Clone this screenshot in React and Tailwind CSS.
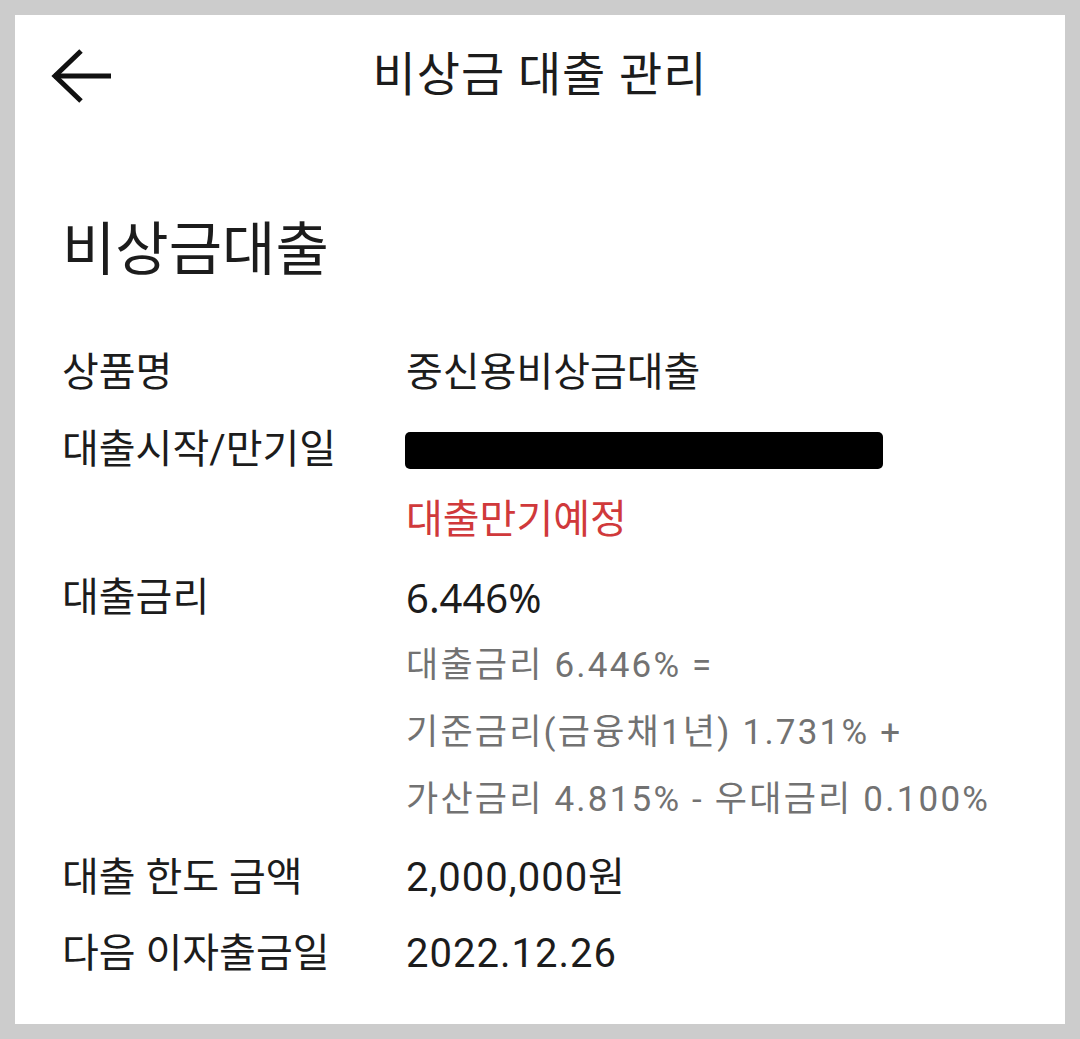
import React from 'react';

const FONT = { fontFamily: '"Roboto", "Noto Sans CJK KR", sans-serif' };

const BackArrow = () => (
  <svg width="64" height="58" viewBox="0 0 64 58" fill="none" stroke="#111" strokeWidth="5">
    <line x1="4" y1="29" x2="61" y2="29" />
    <polyline points="31,4 5,29 31,54" />
  </svg>
);

const App = () => {
  return (
    <div className="w-[1080px] h-[1039px] bg-[#cccccc] p-[15px]" style={FONT}>
      <div className="h-full bg-white text-[#1c1c1c]">
        {/* Header */}
        <div className="grid grid-cols-[1fr_auto_1fr] items-center h-[120px]">
          <div className="pl-[35px] pt-[2px]">
            <BackArrow />
          </div>
          <h1 className="text-[47px] tracking-[1px]">비상금 대출 관리</h1>
          <div />
        </div>

        {/* Section title */}
        <h2 className="mt-[75px] h-[80px] flex items-center pl-[47px] text-[58px]">비상금대출</h2>

        {/* Detail rows */}
        <div className="mt-[45px] pl-[47px] text-[40px]">
          <div className="flex h-[76px] items-center">
            <div className="w-[344px]">상품명</div>
            <div>중신용비상금대출</div>
          </div>

          <div className="flex">
            <div className="w-[344px] h-[78px] flex items-center">대출시작/만기일</div>
            <div className="flex flex-col">
              <div className="h-[78px] flex items-center">
                <div className="w-[478px] h-[37px] bg-black rounded-[5px] -ml-[1px]" />
              </div>
              <div className="h-[62px] flex items-center text-[#d0393b]">대출만기예정</div>
            </div>
          </div>

          <div className="flex mt-[14px]">
            <div className="w-[344px] h-[66px] flex items-center">대출금리</div>
            <div className="flex flex-col">
              <div className="h-[66px] flex items-center" style={{ fontFamily: '"Noto Sans", "Noto Sans CJK KR", sans-serif' }}>6.446%</div>
              <div className="text-[35px] text-[#727272] leading-[67px] tracking-[2.2px] mt-px">
                <div>대출금리 6.446% =</div>
                <div>기준금리(금융채1년) 1.731% +</div>
                <div>가산금리 4.815% - 우대금리 0.100%</div>
              </div>
            </div>
          </div>

          <div className="flex h-[76px] items-center mt-[7px]">
            <div className="w-[344px]">대출 한도 금액</div>
            <div className="tracking-[1px]">2,000,000원</div>
          </div>

          <div className="flex h-[76px] items-center">
            <div className="w-[344px]">다음 이자출금일</div>
            <div className="tracking-[1px]">2022.12.26</div>
          </div>
        </div>
      </div>
    </div>
  );
};

export default App;
